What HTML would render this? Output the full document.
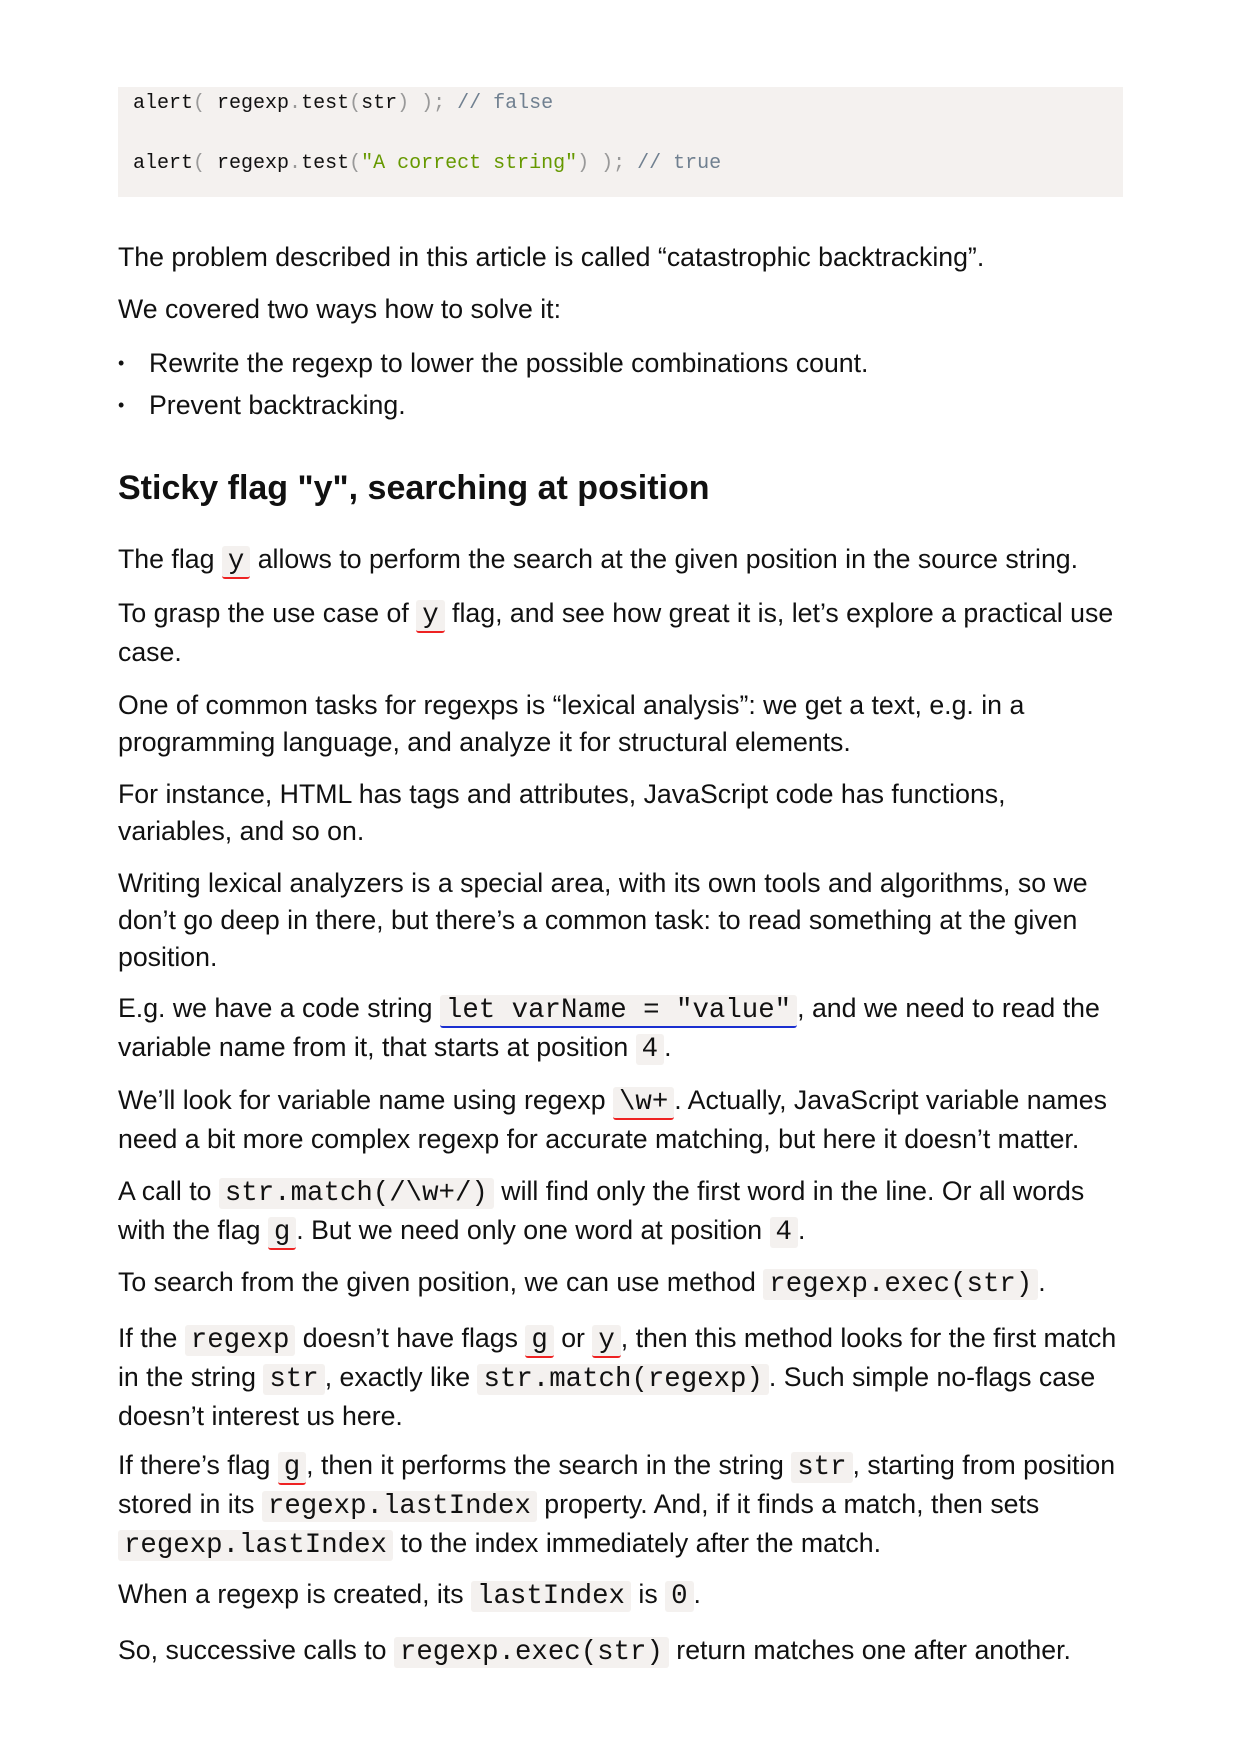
<!DOCTYPE html>
<html><head><meta charset="utf-8"><style>
body{margin:0;width:1240px;height:1754px;background:#fff;position:relative;font-family:"Liberation Sans",sans-serif;color:#111;}
.p{position:absolute;left:118px;width:1003px;font-size:26.7px;line-height:37px;}
code{font-family:"Liberation Mono",monospace;font-size:27.4px;background:#f4f1ef;padding:0 6px;border-radius:3px;letter-spacing:0;}
.r{border-bottom:2px solid #e22;}
.b{border-bottom:2px solid #1a2fd0;}
pre{position:absolute;left:118px;top:87px;width:1005px;height:110px;margin:0;background:#f4f1ef;font-family:"Liberation Mono",monospace;font-size:20px;line-height:30px;padding:2px 0 0 15px;box-sizing:border-box;color:#111;}
pre span.g{color:#999}pre span.c{color:#708090}pre span.s{color:#690}
h2{position:absolute;left:118px;top:468px;margin:0;font-size:34px;font-weight:bold;line-height:40px;}
.li{position:absolute;left:118px;font-size:26.7px;line-height:37px;}
.li:before{content:"•";position:absolute;left:0;font-size:18px;}
.li span{position:absolute;left:31px;white-space:nowrap;}
</style></head><body>
<pre>alert<span class="g">(</span> regexp<span class="g">.</span>test<span class="g">(</span>str<span class="g">) );</span> <span class="c">// false</span>

alert<span class="g">(</span> regexp<span class="g">.</span>test<span class="g">(</span><span class="s">"A correct string"</span><span class="g">) );</span> <span class="c">// true</span></pre>
<div class="p" style="top:239px">The problem described in this article is called “catastrophic backtracking”.</div>
<div class="p" style="top:291px">We covered two ways how to solve it:</div>
<div class="li" style="top:345px"><span>Rewrite the regexp to lower the possible combinations count.</span></div>
<div class="li" style="top:387px"><span>Prevent backtracking.</span></div>
<h2>Sticky flag "y", searching at position</h2>
<div class="p" style="top:541px">The flag <code class="r">y</code> allows to perform the search at the given position in the source string.</div>
<div class="p" style="top:595px">To grasp the use case of <code class="r">y</code> flag, and see how great it is, let’s explore a practical use case.</div>
<div class="p" style="top:687px">One of common tasks for regexps is “lexical analysis”: we get a text, e.g. in a programming language, and analyze it for structural elements.</div>
<div class="p" style="top:776px">For instance, HTML has tags and attributes, JavaScript code has functions, variables, and so on.</div>
<div class="p" style="top:865px">Writing lexical analyzers is a special area, with its own tools and algorithms, so we don’t go deep in there, but there’s a common task: to read something at the given position.</div>
<div class="p" style="top:990px">E.g. we have a code string <code class="b">let varName = "value"</code>, and we need to read the variable name from it, that starts at position <code>4</code>.</div>
<div class="p" style="top:1082px">We’ll look for variable name using regexp <code class="r">\w+</code>. Actually, JavaScript variable names need a bit more complex regexp for accurate matching, but here it doesn’t matter.</div>
<div class="p" style="top:1173px">A call to <code>str.match(/\w+/)</code> will find only the first word in the line. Or all words with the flag <code class="r">g</code>. But we need only one word at position <code>4</code>.</div>
<div class="p" style="top:1264px">To search from the given position, we can use method <code>regexp.exec(str)</code>.</div>
<div class="p" style="top:1320px">If the <code>regexp</code> doesn’t have flags <code class="r">g</code> or <code class="r">y</code>, then this method looks for the first match in the string <code>str</code>, exactly like <code>str.match(regexp)</code>. Such simple no-flags case doesn’t interest us here.</div>
<div class="p" style="top:1447px">If there’s flag <code class="r">g</code>, then it performs the search in the string <code>str</code>, starting from position stored in its <code>regexp.lastIndex</code> property. And, if it finds a match, then sets <code>regexp.lastIndex</code> to the index immediately after the match.</div>
<div class="p" style="top:1576px">When a regexp is created, its <code>lastIndex</code> is <code>0</code>.</div>
<div class="p" style="top:1632px">So, successive calls to <code>regexp.exec(str)</code> return matches one after another.</div>
</body></html>
